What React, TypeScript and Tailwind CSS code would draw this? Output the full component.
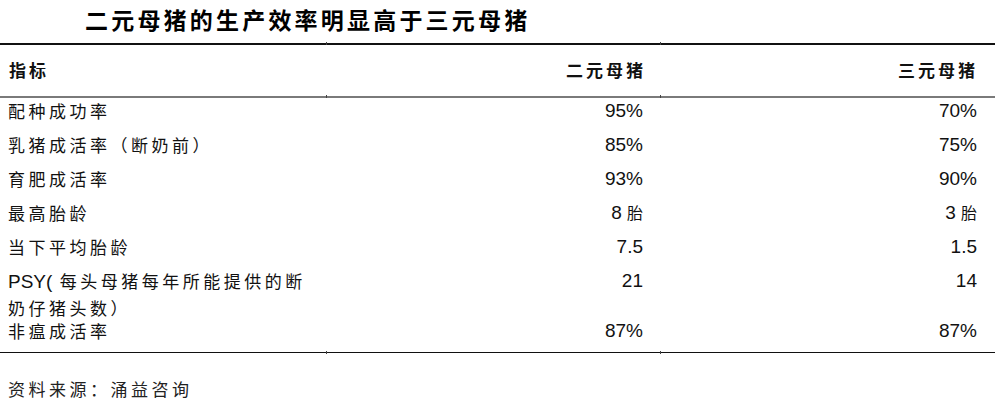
import React from 'react';

const cjk = "font-['Noto_Sans_CJK_SC',sans-serif]";
const num = "font-['Liberation_Sans','Noto_Sans_CJK_SC',sans-serif]";

interface Row {
  label: React.ReactNode;
  a: React.ReactNode;
  b: React.ReactNode;
  tall?: boolean;
}

const Cn: React.FC<{ children: React.ReactNode }> = ({ children }) => (
  <span className={`${cjk} text-[17px] tracking-[3.5px]`}>{children}</span>
);

const Rule: React.FC<{ color: string; thick?: boolean }> = ({ color, thick }) => (
  <div className={`relative w-[995px] ${thick ? 'h-[2px]' : 'h-[1.5px]'} ${color}`}>
    {/* column ticks */}
    <div className="absolute left-[326px] -top-[1px] w-px h-[3px] bg-[#444]" />
    <div className="absolute left-[660px] -top-[1px] w-px h-[3px] bg-[#444]" />
  </div>
);

const rows: Row[] = [
  { label: <Cn>配种成功率</Cn>, a: '95%', b: '70%' },
  { label: <Cn>乳猪成活率（断奶前）</Cn>, a: '85%', b: '75%' },
  { label: <Cn>育肥成活率</Cn>, a: '93%', b: '90%' },
  {
    label: <Cn>最高胎龄</Cn>,
    a: <>8 <span className={`${cjk} text-[16px]`}>胎</span></>,
    b: <>3 <span className={`${cjk} text-[16px]`}>胎</span></>,
  },
  { label: <Cn>当下平均胎龄</Cn>, a: '7.5', b: '1.5' },
  {
    label: (
      <>
        <span className={`${num} text-[19px]`}>PSY(</span>
        <Cn> 每头母猪每年所能提供的断</Cn>
        <br />
        <Cn>奶仔猪头数）</Cn>
      </>
    ),
    a: '21',
    b: '14',
    tall: true,
  },
  { label: <Cn>非瘟成活率</Cn>, a: '87%', b: '87%' },
];

export default function App() {
  return (
    <div className="w-[1002px] h-[404px] bg-white text-[#111] overflow-hidden">
      <div className="h-[43px] flex items-center pb-[5px] pl-[85px]">
        <h1 className={`${cjk} text-[23px] font-bold tracking-[3.2px] text-black`}>
          二元母猪的生产效率明显高于三元母猪
        </h1>
      </div>

      <Rule color="bg-[#111]" />

      <div className="grid grid-cols-[326px_334px_335px] w-[995px] h-[51px] items-center">
        <div className={`pl-[9px] ${cjk} text-[17px] font-bold tracking-[3px]`}>指标</div>
        <div className={`pr-[14px] text-right ${cjk} text-[17px] font-bold tracking-[3px]`}>二元母猪</div>
        <div className={`pr-[17px] text-right ${cjk} text-[17px] font-bold tracking-[3px]`}>三元母猪</div>
      </div>

      <Rule color="bg-[#7a7a7a]" thick />

      <div className="w-[995px]">
        {rows.map((r, i) => (
          <div
            key={i}
            className={`grid grid-cols-[326px_334px_335px] leading-[25px] ${r.tall ? 'h-[50px]' : 'h-[34px]'}`}
          >
            <div className="pl-[8px] whitespace-nowrap">{r.label}</div>
            <div className={`pr-[17px] text-right ${num} text-[19px]`}>{r.a}</div>
            <div className={`pr-[18px] text-right ${num} text-[19px]`}>{r.b}</div>
          </div>
        ))}
      </div>

      <Rule color="bg-[#111]" />

      <div className="mt-[23px] pl-[8px] leading-[25px] text-[#222]">
        <Cn>资料来源：涌益咨询</Cn>
      </div>
    </div>
  );
}
